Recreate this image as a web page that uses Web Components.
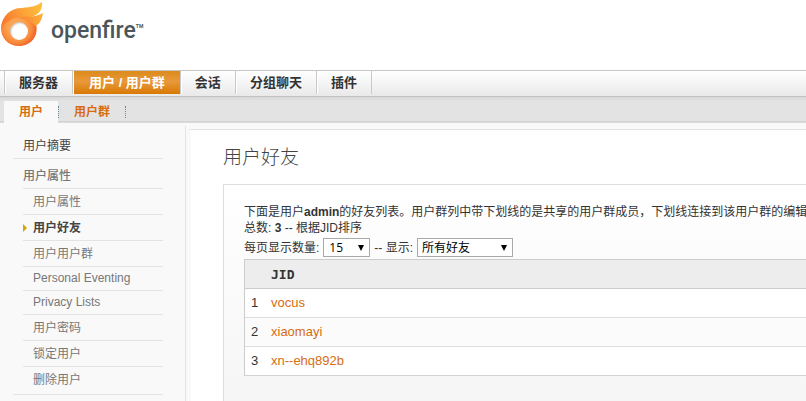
<!DOCTYPE html>
<html lang="zh-CN">
<head>
<meta charset="utf-8">
<title>Openfire 管理界面: 用户好友</title>
<style>
  body {
    margin: 0;
    overflow: hidden;
    background: #fff;
    color: #333;
    font: 12px/16px "Liberation Sans", "Noto Sans CJK SC", sans-serif;
  }
</style>
</head>
<body>
<admin-page>
  <openfire-logo slot="header"></openfire-logo>
  <main-nav slot="nav">
    <main-tab>服务器</main-tab>
    <main-tab active>用户 / 用户群</main-tab>
    <main-tab>会话</main-tab>
    <main-tab>分组聊天</main-tab>
    <main-tab>插件</main-tab>
  </main-nav>
  <sub-nav slot="subnav">
    <sub-tab active>用户</sub-tab>
    <sub-tab>用户群</sub-tab>
  </sub-nav>
  <side-menu slot="side"></side-menu>
  <roster-panel></roster-panel>
</admin-page>

<script>
class BaseElement extends HTMLElement {
  connectedCallback() {
    if (this.shadowRoot) return;
    const template = document.createElement('template');
    template.innerHTML = this.render();
    this.attachShadow({ mode: 'open' });
    this.shadowRoot.appendChild(template.content.cloneNode(true));
  }
}

class AdminPage extends BaseElement {
  render() {
    return `
      <style>
        :host { display: flex; flex-direction: column; min-height: 100vh; }
        header { height: 70px; }
        .body { display: flex; flex: 1; background: #f9f9f9; }
        aside { flex: none; width: 185px; margin-top: 3px; border-right: 1px solid #e3e3e3; }
        main {
          flex: 1;
          min-width: 0;
          margin-top: 6px;
          border-top: 1px solid #e3e3e3;
          border-left: 5px solid #f9f9f9;
          border-top-left-radius: 5px;
          background: #fff;
        }
      </style>
      <header><slot name="header"></slot></header>
      <slot name="nav"></slot>
      <slot name="subnav"></slot>
      <div class="body">
        <aside><slot name="side"></slot></aside>
        <main><slot></slot></main>
      </div>
    `;
  }
}

class OpenfireLogo extends BaseElement {
  render() {
    return `
      <style>
        :host { display: flex; align-items: flex-start; }
        svg { display: block; width: 51px; height: 50px; }
        .name {
          padding-top: 16px;
          font: 500 23px/30px Roboto, sans-serif;
          color: #4b565b;
        }
        .tm { padding-top: 22px; font: 700 5px/8px Roboto, sans-serif; color: #4b565b; }
      </style>
      <svg viewBox="0 0 51 50" aria-hidden="true">
        <defs>
          <radialGradient id="ring" cx="17" cy="28" r="21" gradientUnits="userSpaceOnUse">
            <stop offset="0.4" stop-color="#fca552"/>
            <stop offset="0.7" stop-color="#f98a3a"/>
            <stop offset="1" stop-color="#ee5423"/>
          </radialGradient>
          <linearGradient id="top" x1="5" y1="22" x2="43" y2="4" gradientUnits="userSpaceOnUse">
            <stop offset="0" stop-color="#f77c31"/>
            <stop offset="0.5" stop-color="#fba338"/>
            <stop offset="1" stop-color="#fdc43c"/>
          </linearGradient>
          <linearGradient id="low" x1="20" y1="20" x2="43" y2="15" gradientUnits="userSpaceOnUse">
            <stop offset="0" stop-color="#f98637"/>
            <stop offset="0.5" stop-color="#fb9a35"/>
            <stop offset="1" stop-color="#fbb03a"/>
          </linearGradient>
          <radialGradient id="hole" cx="20" cy="32" r="10" gradientUnits="userSpaceOnUse">
            <stop offset="0.75" stop-color="#fff"/>
            <stop offset="1" stop-color="#c9c4be"/>
          </radialGradient>
        </defs>
        <path fill="url(#ring)" d="M1 28C2 18 9 12 19 13C24 15 32 17 36 24C39 36 31 46 19 46C8 46 1 38 1 28Z"/>
        <path fill="url(#top)" d="M1 28C2 16 10 8 22 8C31 7 37 6 42 2C43 9 39 15 31 17C23 17 10 15 1 28Z"/>
        <path fill="url(#low)" d="M17 18C25 16 35 18 43 13C42 20 39 25 35 26C31 21 25 18 17 18Z"/>
        <circle cx="19" cy="31" r="9" fill="url(#hole)"/>
      </svg>
      <span class="name">openfire</span><span class="tm">TM</span>
    `;
  }
}

class MainNav extends BaseElement {
  render() {
    return `
      <style>
        :host { display: block; }
        nav {
          display: flex;
          height: 25px;
          padding-left: 4px;
          border-top: 1px solid #c6c6c6;
          border-bottom: 1px solid #c2c2c2;
          background: linear-gradient(#fff, #e9e9e9);
        }
      </style>
      <nav><slot></slot></nav>
    `;
  }
}

class MainTab extends BaseElement {
  render() {
    return `
      <style>
        :host {
          display: block;
          height: 23px;
          border-right: 1px solid #c9c9c9;
          font-weight: 700;
          font-size: 13px;
          line-height: 23px;
        }
        :host(:first-child) { border-left: 1px solid #c9c9c9; }
        a {
          display: block;
          padding: 0 14px 0 13px;
          border-left: 1px solid #fff;
          color: #333;
          text-decoration: none;
          white-space: nowrap;
        }
        :host([active]) a { padding: 0 15px; background: linear-gradient(#dc8a1b, #e8993a 45%, #d97904); color: #fff; }
      </style>
      <a href="#"><slot></slot></a>
    `;
  }
}

class SubNav extends BaseElement {
  render() {
    return `
      <style>
        :host { display: block; }
        nav {
          display: flex;
          align-items: flex-end;
          height: 26px;
          padding-left: 4px;
          background: linear-gradient(#d6d6d6, #e3e3e3 4px, #e3e3e3 24px, #cfcfcf 24px, #dedede);
        }
      </style>
      <nav><slot></slot></nav>
    `;
  }
}

class SubTab extends BaseElement {
  render() {
    return `
      <style>
        :host { display: flex; align-items: center; height: 22px; font-weight: 700; line-height: 22px; }
        :host([active]) a { background: #f9f9f9; }
        :host::after { content: ""; height: 12px; border-right: 1px dotted #6b8a96; }
        a { padding: 0 15px; color: #d76d10; text-decoration: none; }
      </style>
      <a href="#"><slot></slot></a>
    `;
  }
}

class SideMenu extends BaseElement {
  render() {
    return `
      <style>
        :host { display: block; padding: 7px 22px 0 13px; }
        a { display: block; color: #777; text-decoration: none; }
        ul { margin: 0; padding: 0; list-style: none; }
        .summary { padding: 1px 0 0 10px; line-height: 24px; color: #444; border-bottom: 1px solid #e3e3e3; }
        .group { padding-bottom: 2px; border-bottom: 1px solid #e3e3e3; }
        h2 {
          margin: 0 0 0 10px;
          padding-top: 5px;
          border-bottom: 1px solid #e3e3e3;
          font-size: 12px;
          font-weight: 500;
          line-height: 24px;
          color: #777;
        }
        li { margin-left: 10px; border-bottom: 1px solid #e3e3e3; padding-top: 1px; line-height: 24px; }
        li a { padding-left: 10px; }
        li.latin { padding-top: 0; line-height: 23px; }
        li:last-child { border-bottom: 0; }
        .current a { display: flex; align-items: center; padding-left: 0; color: #444; font-weight: 700; }
        .current a::before {
          content: "";
          margin-right: 6px;
          border: 4px solid transparent;
          border-left-color: #d9a300;
          border-right: 0;
        }
      </style>
      <a class="summary" href="#">用户摘要</a>
      <div class="group">
        <h2>用户属性</h2>
        <ul>
          <li><a href="#">用户属性</a></li>
          <li class="current"><a href="#">用户好友</a></li>
          <li><a href="#">用户用户群</a></li>
          <li class="latin"><a href="#">Personal Eventing</a></li>
          <li class="latin"><a href="#">Privacy Lists</a></li>
          <li><a href="#">用户密码</a></li>
          <li><a href="#">锁定用户</a></li>
          <li><a href="#">删除用户</a></li>
        </ul>
      </div>
    `;
  }
}

class DropDown extends BaseElement {
  render() {
    return `
      <style>
        :host { display: inline-grid; align-items: center; }
        select {
          grid-area: 1 / 1;
          appearance: none;
          height: 19px;
          margin: 0;
          padding: 0 26px 0 5px;
          border: 1px solid #a9a9a9;
          border-radius: 0;
          background: #fff;
          color: #000;
          font: 12px/17px "Open Sans", "Noto Sans CJK SC", sans-serif;
        }
        :host([wide]) select { padding: 0 41px 0 4px; }
        svg { grid-area: 1 / 1; justify-self: end; width: 6px; height: 6px; margin-right: 6px; pointer-events: none; }
      </style>
      <select aria-label="${this.getAttribute('label')}"><option>${this.getAttribute('value')}</option></select>
      <svg viewBox="0 0 6 6" aria-hidden="true"><path d="M0 0H6L3 6Z"/></svg>
    `;
  }
}

class RosterTable extends BaseElement {
  render() {
    const jids = ['vocus', 'xiaomayi', 'xn--ehq892b'];
    const rows = jids.map((jid, i) => `<tr><td>${i + 1}</td><td><a href="#">${jid}</a></td></tr>`);
    return `
      <style>
        :host { display: block; }
        table { width: 100%; border: 1px solid #ccc; border-bottom: 0; border-spacing: 0; background: #fff; }
        th, td { padding: 0 6px; height: 28px; text-align: left; border-bottom: 1px solid #ddd; font-size: 13px; }
        th { background: #ededed; border-color: #ccc; font: 700 13px "DejaVu Sans Mono", monospace; }
        th:first-child, td:first-child { width: 8px; }
        tr:nth-child(even) td { background: #fbfbfb; }
        tr:last-child td { border-color: #d3d3d3; }
        a { color: #d76d10; text-decoration: none; }
      </style>
      <table>
        <thead><tr><th></th><th>JID</th></tr></thead>
        <tbody>${rows.join('')}</tbody>
      </table>
    `;
  }
}

class RosterPanel extends BaseElement {
  render() {
    return `
      <style>
        :host { display: block; padding: 14px 0 0 32px; }
        h1 { margin: 0; font-size: 19px; font-weight: 300; line-height: 28px; color: #444; }
        /* the list is wider than the window and runs out of view on the right */
        .box {
          margin: 12px -40px 0 0;
          padding: 19px 20px 40px;
          border: 1px solid #ddd;
          background: linear-gradient(#fff, #f5f5f5);
          white-space: nowrap;
        }
        p { margin: 0; }
        b { font-weight: 700; }
        .filter { display: flex; align-items: center; gap: 4px; height: 23px; }
      </style>
      <h1>用户好友</h1>
      <div class="box">
        <p>下面是用户<b>admin</b>的好友列表。用户群列中带下划线的是共享的用户群成员，下划线连接到该用户群的编辑</p>
        <p>总数: <b>3</b> -- 根据JID排序</p>
        <div class="filter">
          <span>每页显示数量:</span>
          <drop-down label="每页显示数量" value="15"></drop-down>
          <span>-- 显示:</span>
          <drop-down wide label="显示" value="所有好友"></drop-down>
        </div>
        <roster-table></roster-table>
      </div>
    `;
  }
}

customElements.define('admin-page', AdminPage);
customElements.define('openfire-logo', OpenfireLogo);
customElements.define('main-nav', MainNav);
customElements.define('main-tab', MainTab);
customElements.define('sub-nav', SubNav);
customElements.define('sub-tab', SubTab);
customElements.define('side-menu', SideMenu);
customElements.define('drop-down', DropDown);
customElements.define('roster-table', RosterTable);
customElements.define('roster-panel', RosterPanel);
</script>
</body>
</html>
